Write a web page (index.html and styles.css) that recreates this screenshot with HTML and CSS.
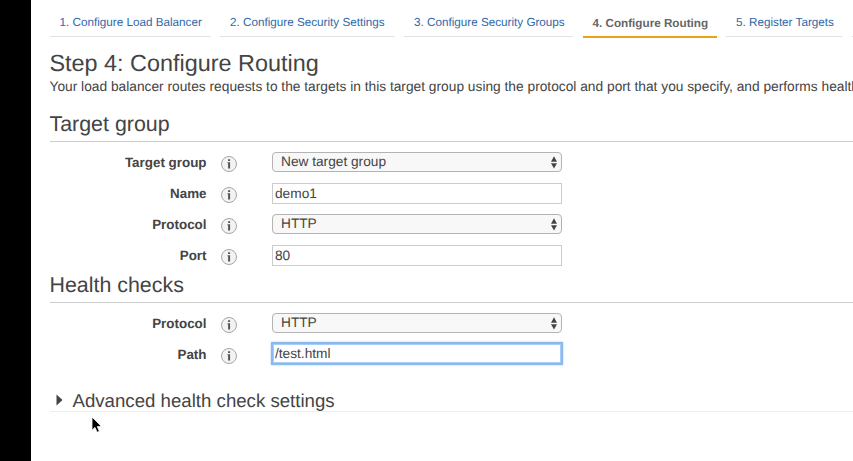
FILE: index.html
```html
<!DOCTYPE html>
<html lang="en">
<head>
<meta charset="utf-8">
<title>Configure Routing</title>
<link rel="stylesheet" href="styles.css">
</head>
<body>
<svg class="defs" width="0" height="0" aria-hidden="true">
  <symbol id="info" viewBox="0 0 18 18">
    <circle cx="9" cy="9" r="7.5" fill="#f3f3f3" stroke="#a6a6a6" stroke-width="1"/>
    <path d="M8.1 4.2h2v1.9h-2zM7.5 7.2h2.6v6.4h-2V8.2h-.6z" fill="#555"/>
  </symbol>
  <symbol id="arrows" viewBox="0 0 6 13">
    <path d="M3 .2 6 5.7H0zM3 12.6 6 7.2H0z" fill="#444"/>
  </symbol>
</svg>
<div class="app">
  <aside class="edge"></aside>
  <main class="wizard">
    <nav class="steps">
      <a class="step s1"><span>1. Configure Load Balancer</span></a>
      <a class="step s2"><span>2. Configure Security Settings</span></a>
      <a class="step s3"><span>3. Configure Security Groups</span></a>
      <a class="step s4 active"><span>4. Configure Routing</span></a>
      <a class="step s5"><span>5. Register Targets</span></a>
      <a class="step s6"></a>
    </nav>
    <h1><span>Step 4: Configure Routing</span></h1>
    <p class="intro"><span>Your load balancer routes requests to the targets in this target group using the protocol and port that you specify, and performs health</span></p>
    <h2 class="target"><span>Target group</span></h2>
    <section class="fields">
      <div class="row"><label>Target group</label><svg class="info"><use href="#info"/></svg><div class="select"><span>New target group</span><svg class="arrows"><use href="#arrows"/></svg></div></div>
      <div class="row"><label>Name</label><svg class="info"><use href="#info"/></svg><div class="input"><span>demo1</span></div></div>
      <div class="row"><label>Protocol</label><svg class="info"><use href="#info"/></svg><div class="select"><span>HTTP</span><svg class="arrows"><use href="#arrows"/></svg></div></div>
      <div class="row"><label>Port</label><svg class="info"><use href="#info"/></svg><div class="input"><span>80</span></div></div>
    </section>
    <h2 class="health"><span>Health checks</span></h2>
    <section class="fields">
      <div class="row"><label>Protocol</label><svg class="info"><use href="#info"/></svg><div class="select"><span>HTTP</span><svg class="arrows"><use href="#arrows"/></svg></div></div>
      <div class="row"><label>Path</label><svg class="info"><use href="#info"/></svg><div class="input focus"><span>/test.html</span></div></div>
    </section>
    <h3 class="advanced"><svg class="caret" viewBox="0 0 7 12"><path d="M.5.5 6.5 6 .5 11.5z" fill="#444"/></svg><span>Advanced health check settings</span></h3>
  </main>
</div>
<svg class="cursor" viewBox="0 0 12 18"><path d="M1 1v13.2l3-2.8 2.1 4.9 2.3-1-2.1-4.7h4.2z" fill="#000" stroke="#fff" stroke-width=".8"/></svg>
</body>
</html>
```
FILE: styles.css
```css
* { box-sizing: border-box; }
body {
  margin: 0;
  overflow: hidden;
  background: #fff;
  color: #444;
  font-family: "Liberation Sans", Arial, sans-serif;
  text-rendering: geometricPrecision;
}
.defs { position: absolute; }
.app { display: flex; height: 461px; }
.edge { flex: 0 0 31px; background: #000; }
.wizard { flex: 1; min-width: 0; padding-left: 18.5px; overflow: hidden; white-space: nowrap; }

.steps { display: flex; gap: 9.5px; height: 38px; }
.step {
  flex: none;
  height: 37px;
  padding: 15px 0 0 10px;
  border-bottom: 1.5px solid #e2e2e2;
  color: #3068a8;
  font-size: 11.7px;
  line-height: 15px;
}
.s1 { width: 161px; }
.s2 { width: 174.5px; }
.s3 { width: 169px; }
.s4 { width: 134px; }
.s5 { width: 116px; }
.s6 { width: 60px; }
.step.active {
  height: 38px;
  padding-top: 16px;
  border-bottom: 2px solid #e9a317;
  color: #666;
  font-weight: bold;
}

h1, h2, h3, p { margin: 0; font-weight: normal; }
h1 { height: 38px; padding-top: 11px; font-size: 23.4px; line-height: 28px; }
.intro { height: 22px; padding-top: 3px; font-size: 13.75px; line-height: 16px; }
h2 { border-bottom: 1px solid #ccc; font-size: 21.4px; line-height: 26px; }
.target { height: 44px; padding-top: 13px; }
.health { height: 32px; padding-top: 1px; }

.fields { padding-top: 5px; }
.row { display: flex; align-items: center; height: 31px; }
label {
  width: 157px;
  text-align: right;
  font-size: 13.4px;
  font-weight: bold;
  line-height: 16px;
}
.info { width: 18px; height: 18px; margin: 2px 34px 0 13.5px; }
.select, .input {
  display: flex;
  align-items: center;
  width: 290px;
  font-size: 13.7px;
  line-height: 16px;
}
.select {
  justify-content: space-between;
  height: 20px;
  margin-bottom: 1px;
  padding: 0 4px 1px 8px;
  border: 1px solid #b4b4b4;
  border-radius: 4px;
  background: #f8f8f8;
}
.arrows { width: 6px; height: 13px; margin-top: 1px; }
.input { height: 21px; padding: 0 0 0 2px; border: 1px solid #ccc; }
.focus { margin-bottom: 2px; border-color: #8bb9ee; box-shadow: 0 0 0 1px #8bb9ee, inset 0 0 0 1px #a9cdf5, 0 0 2px 1px #a5d0fa; }

.advanced {
  display: flex;
  align-items: center;
  height: 42px;
  padding: 20px 0 0 6px;
  border-bottom: 1px solid #eee;
  font-size: 18.65px;
  line-height: 22px;
}
.caret { width: 7px; height: 12px; margin: 0 10px 2px 0; }
.cursor { position: absolute; left: 90.5px; top: 416px; width: 12px; height: 18px; }
```
